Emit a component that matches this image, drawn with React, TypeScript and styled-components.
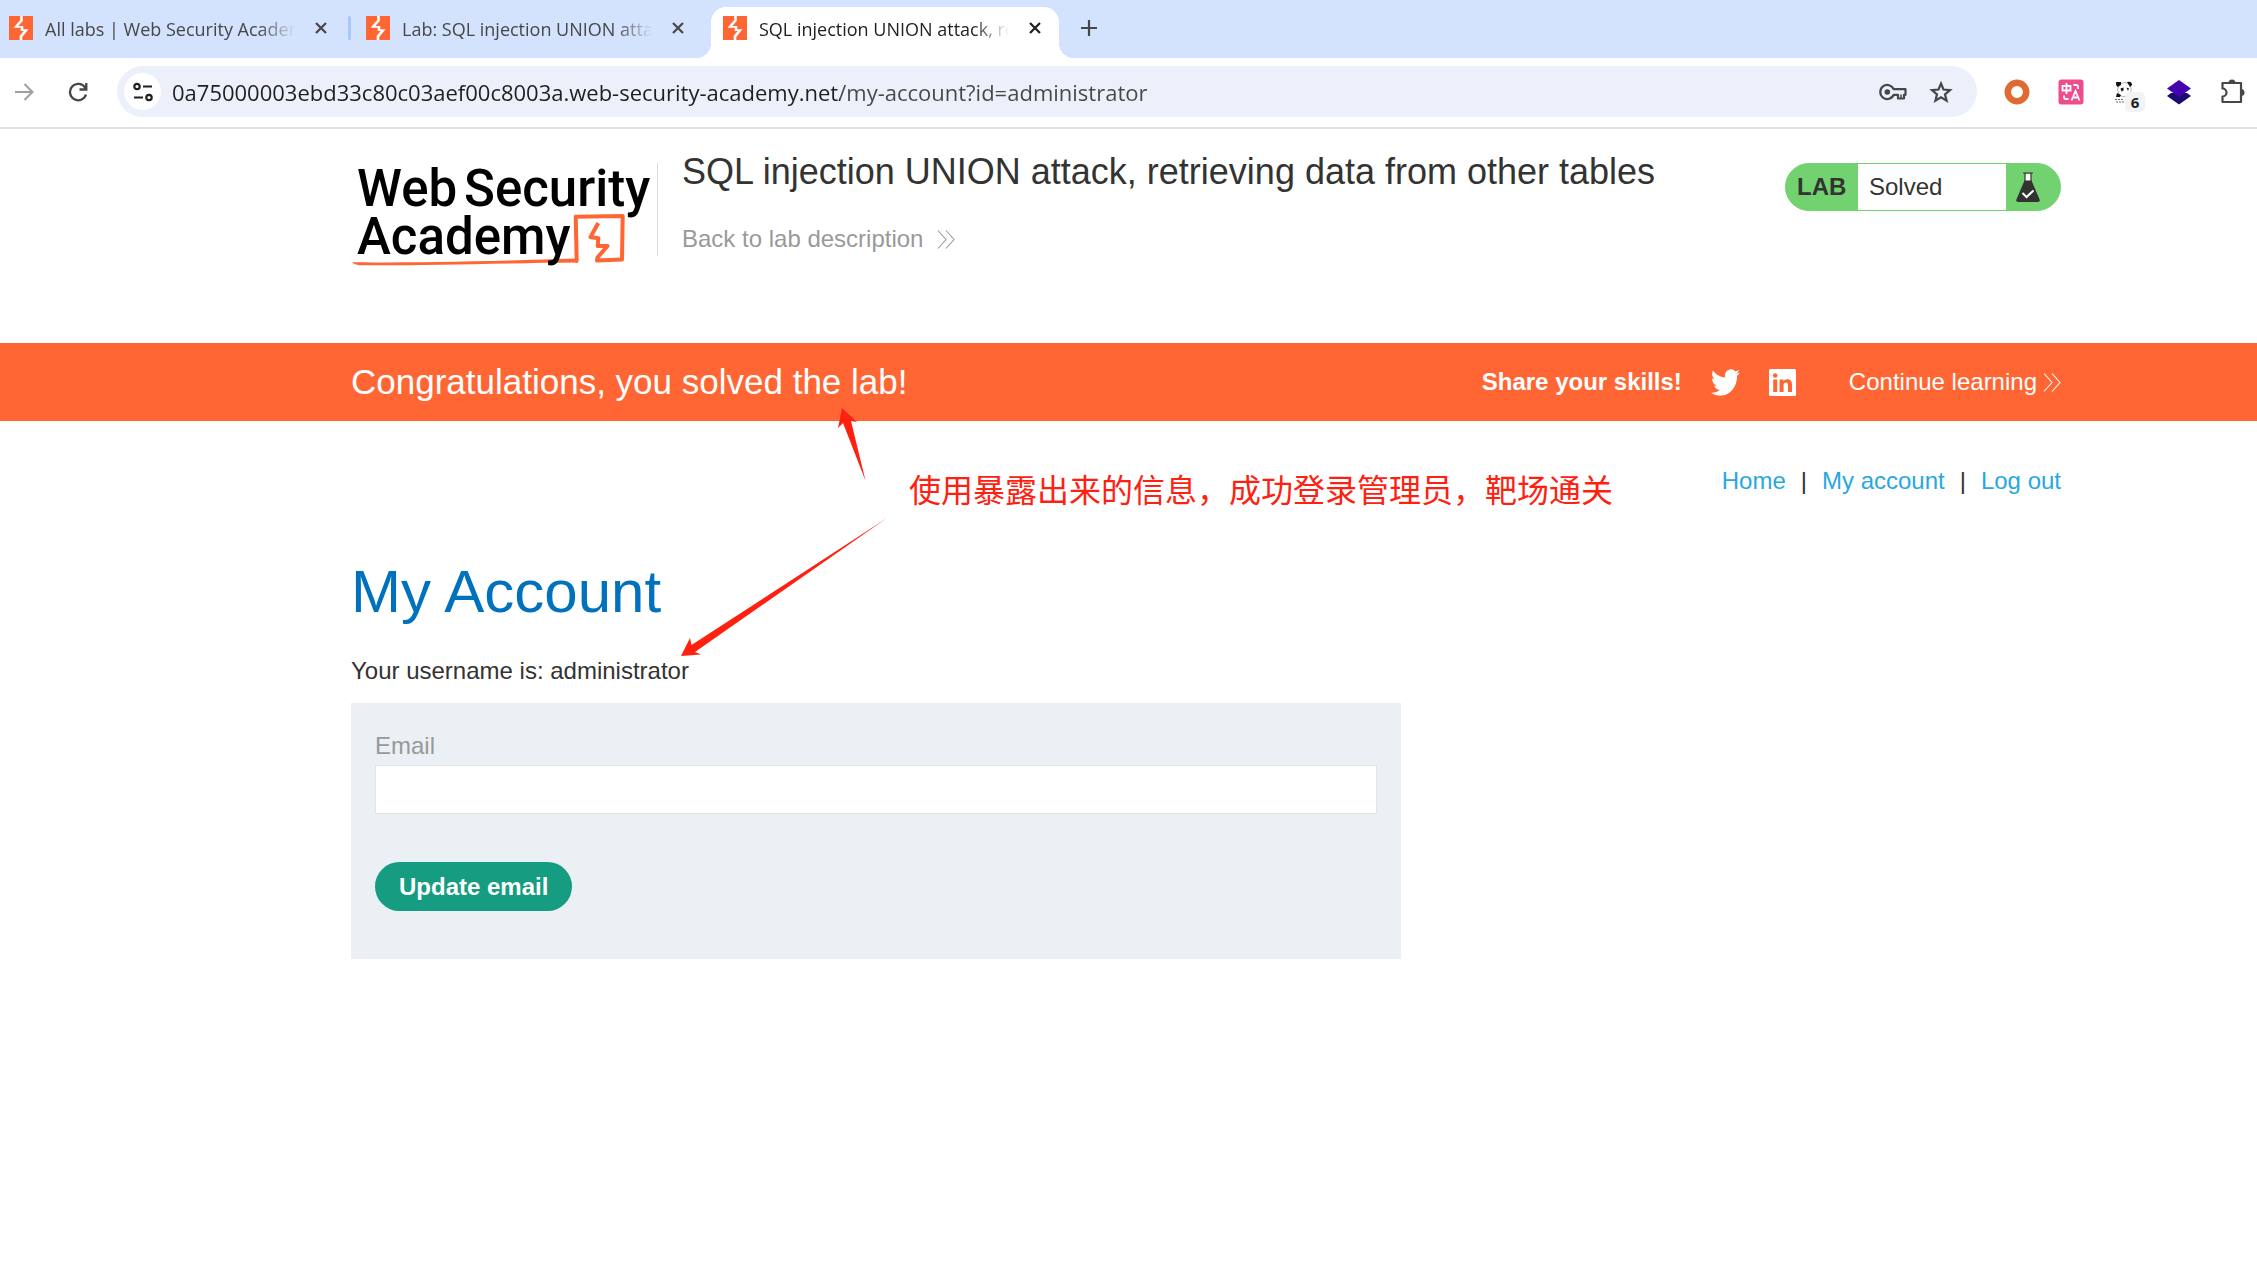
import React from "react";
import styled, { createGlobalStyle } from "styled-components";

const UI_FONT = '"Open Sans", "Noto Sans", "Noto Sans CJK SC", sans-serif';
const PAGE_FONT = '"Liberation Sans", Arial, "Noto Sans CJK SC", sans-serif';

const GlobalStyle = createGlobalStyle`
  *, *::before, *::after { box-sizing: border-box; }
  body { margin: 0; background: #fff; color: #333332; font-family: ${PAGE_FONT}; font-size: 24px; line-height: 28px; }
  h1, h2, p { margin: 0; font-weight: 400; }
  a { text-decoration: none; }
  button { border: 0; padding: 0; background: none; cursor: pointer; font: inherit; color: inherit; }
  svg { display: block; flex: none; }
`;

const Screen = styled.div`
  position: relative;
  min-height: 100vh;
`;

/* ---------- browser chrome ---------- */

const TabStrip = styled.div`
  display: flex;
  align-items: flex-end;
  height: 58px;
  background: #d3e2fd;
  font-family: ${UI_FONT};
`;

const Tab = styled.div<{ $active?: boolean; $divider?: boolean }>`
  position: relative;
  display: flex;
  align-items: center;
  flex: 0 1 ${(p) => (p.$active ? "348px" : "357px")};
  min-width: 0;
  height: 51px;
  padding: 0 ${(p) => (p.$active ? "12px" : "24px")} 9px ${(p) => (p.$active ? "12px" : "9px")};
  border-radius: 15px 15px 0 0;
  color: ${(p) => (p.$active ? "#1f1f1f" : "#474747")};
  background: ${(p) => (p.$active ? "#fff" : "transparent")};

  ${(p) =>
    p.$active &&
    `
    margin-left: -3px;
    &::before, &::after {
      content: "";
      position: absolute;
      bottom: 0;
      width: 15px;
      height: 15px;
    }
    &::before { right: 100%; background: radial-gradient(circle at 0 0, transparent 15px, #fff 15px); }
    &::after { left: 100%; background: radial-gradient(circle at 100% 0, transparent 15px, #fff 15px); }
  `}

  ${(p) =>
    p.$divider &&
    `
    &::after {
      content: "";
      position: absolute;
      right: 6px;
      top: 9px;
      width: 3px;
      height: 24px;
      border-radius: 2px;
      background: #a8c7fa;
    }
  `}
`;

const TabTitle = styled.span`
  flex: 1;
  min-width: 0;
  margin-left: 12px;
  padding-top: 2px;
  overflow: hidden;
  white-space: nowrap;
  font-size: 18px;
  line-height: 28px;
  mask-image: linear-gradient(to right, #000 calc(100% - 36px), transparent);
`;

const TabClose = styled.button`
  display: grid;
  place-items: center;
  width: 24px;
  height: 24px;
  margin-left: 14px;
`;

const NewTab = styled.button`
  display: grid;
  place-items: center;
  width: 30px;
  height: 30px;
  margin: 0 0 15px 15px;
  color: #474747;
`;

const Toolbar = styled.div`
  display: flex;
  align-items: center;
  height: 71px;
  padding: 0 11px 2px 10px;
  border-bottom: 2px solid #e0e2e1;
  background: #fff;
`;

const ToolButton = styled.button<{ $muted?: boolean }>`
  display: grid;
  place-items: center;
  width: 28px;
  height: 28px;
  color: ${(p) => (p.$muted ? "#a0a0a0" : "#474747")};
`;

const NavButtons = styled.div`
  display: flex;
  gap: 26px;
  margin-right: 25px;
`;

const Omnibox = styled.div`
  display: flex;
  align-items: center;
  flex: 1;
  height: 51px;
  padding: 0 22px 0 7px;
  border-radius: 26px;
  background: #ecf0fa;
`;

const SiteInfo = styled.button`
  display: grid;
  place-items: center;
  width: 37px;
  height: 37px;
  border-radius: 50%;
  background: #fff;
  color: #1f1f1f;
`;

const Address = styled.input`
  flex: 1;
  min-width: 0;
  margin-left: 11px;
  padding: 0;
  border: 0;
  outline: 0;
  font-family: ${UI_FONT};
  font-size: 22px;
  line-height: 32px;
  color: transparent;
  background: linear-gradient(to right, #1f1f1f 668px, #474747 668px);
  background-clip: text;
`;

const OmniboxActions = styled.div`
  display: flex;
  align-items: center;
  gap: 20px;
`;

const Extensions = styled.div`
  display: flex;
  align-items: center;
  gap: 28px;
  margin-left: 27px;
`;

const ExtensionButton = styled.button`
  position: relative;
  width: 26px;
  height: 26px;
`;

const ExtensionBadge = styled.span`
  position: absolute;
  left: 13px;
  top: 13px;
  width: 20px;
  height: 20px;
  border-radius: 5px;
  background: #f1f3f4;
  color: #1f1f1f;
  font: 700 15px/20px ${UI_FONT};
  text-align: center;
`;

/* ---------- lab page ---------- */

const gutters = "padding-left: 351px; padding-right: 196px;";

const Header = styled.header`
  display: flex;
  align-items: flex-start;
  ${gutters}
  padding-top: 23px;
  padding-bottom: 74px;
`;

const LogoDivider = styled.div`
  width: 1px;
  height: 93px;
  margin: 11px 24px 0 0;
  background: #dcdcdc;
`;

const TitleGroup = styled.div`
  flex: 1;
  min-width: 0;
`;

const LabTitle = styled.h2`
  font-size: 36px;
  line-height: 40px;
`;

const BackLink = styled.a`
  display: inline-flex;
  align-items: center;
  gap: 14px;
  margin-top: 33px;
  color: #999;
`;

const LabStatus = styled.div`
  display: flex;
  width: 276px;
  height: 48px;
  margin-top: 11px;
  border: 1px solid #71d26f;
  border-radius: 24px;
  overflow: hidden;
  background: #71d26f;
  line-height: 46px;
`;

const LabTag = styled.strong`
  width: 72px;
  padding-left: 11px;
`;

const LabState = styled.span`
  flex: 1;
  padding-left: 11px;
  background: #fff;
`;

const LabFlask = styled.span`
  width: 54px;
  padding: 8px 0 0 10px;
`;

const Banner = styled.section`
  display: flex;
  align-items: center;
  ${gutters}
  height: 78px;
  background: #ff6633;
  color: #fff;
`;

const BannerText = styled.p`
  flex: 1;
  font-size: 35px;
  line-height: 40px;
`;

const ShareLinks = styled.div`
  display: flex;
  align-items: center;
  gap: 29px;
  margin-right: 53px;
  a { color: #fff; }
`;

const ContinueLink = styled.a`
  display: flex;
  align-items: center;
  gap: 6px;
  color: #fff;
`;

const Main = styled.main`
  ${gutters}
  padding-top: 46px;
`;

const TopLinks = styled.nav`
  display: flex;
  justify-content: flex-end;
  gap: 15px;
  a { color: #29a7df; }
`;

const PageTitle = styled.h1`
  margin-top: 63px;
  font-size: 60px;
  line-height: 68px;
  color: #0071bd;
`;

const UserLine = styled.p`
  margin: 31px 0 18px;
`;

const EmailForm = styled.form`
  display: flex;
  flex-direction: column;
  align-items: flex-start;
  max-width: 1050px;
  padding: 24px 24px 48px;
  background: #eaf0f3;
`;

const EmailLabel = styled.label`
  line-height: 38px;
  color: #999;
`;

const EmailInput = styled.input`
  width: 100%;
  height: 49px;
  margin-bottom: 48px;
  padding: 0 12px;
  border: 1px solid #e0e5e6;
  border-radius: 0;
  background: #fff;
  font: 24px/28px ${PAGE_FONT};
`;

const SubmitButton = styled.button`
  height: 49px;
  padding: 0 24px;
  border-radius: 25px;
  background: #169c80;
  color: #fff;
  font-weight: 700;
`;

/* ---------- annotations drawn over the page ---------- */

const Note = styled.p`
  position: absolute;
  left: 909px;
  top: 464px;
  color: #ff2010;
  font-family: "Noto Sans CJK SC", sans-serif;
  font-size: 32px;
  line-height: 48px;
  white-space: nowrap;
`;

const Arrows = styled.svg`
  position: absolute;
  left: 681px;
  top: 408px;
  pointer-events: none;
`;

/* ---------- drawings ---------- */

const Favicon = () => (
  <svg width="24" height="24" viewBox="0 0 24 24">
    <path fill="#ff6633" d="M0 0h24v24H0z" />
    <path fill="#fff" d="M11.200 0h2.600v5L9.300 10h5v3.300H19.500L13.300 21v3h-2.600v-4.300l4-4.700h-3v-3.300H4.500L11.200 4z" />
  </svg>
);

const Cross = () => (
  <svg width="12" height="12" viewBox="0 0 12 12" fill="none" stroke="currentColor" strokeWidth="2.2">
    <path d="M1 1l10 10M11 1L1 11" />
  </svg>
);

const Chevrons = () => (
  <svg width="18" height="19" viewBox="0 0 18 19" fill="none" stroke="currentColor" strokeWidth="1.1">
    <path d="M1 .5l8 9-8 9M9 .5l8 9-8 9" />
  </svg>
);

const Logo = () => (
  <svg width="306" height="117" viewBox="0 -11 306 117">
    <path
      fill="none"
      stroke="#ff6633"
      strokeWidth="4"
      strokeLinejoin="round"
      d="M224 98.500L225.700 97.500 224.700 53.700 271.700 53 271 96.500 246 97.500 246.500 94.500 256.500 83 246.700 83 247.300 75.300 239.500 74 247.300 60"
    />
    <path fill="#ff6633" d="M.7 99.300C60 99.800 150 98 226 95.500L227 99.500C150 100 60 103 8 102.200Q2 101 .7 99.300z" />
    <g fill="#000" fontFamily="Roboto, sans-serif" fontWeight="500" fontSize="51">
      <text x="6" y="43">Web</text>
      <text x="113" y="43">Security</text>
      <text x="6" y="91">Academy</text>
    </g>
  </svg>
);

const Flask = () => (
  <svg width="24" height="31" viewBox="0 0 24 31">
    <path fill="#fff" d="M9 2h6v8H9z" />
    <path fill="none" stroke="#333332" strokeWidth="1.2" d="M7 1h10M9 1.500V10M15 1.500V10" />
    <path fill="#333332" d="M8.500 8.500h7L23.600 27.500Q24.300 30 22 30H2Q-.3 30 .4 27.500z" />
    <path fill="none" stroke="#fff" strokeWidth="2" d="M6.500 21l4 4 7-6.500" />
  </svg>
);

const Twitter = () => (
  <svg width="29" height="27" viewBox="0 2 24 20" fill="#fff" preserveAspectRatio="none">
    <path d="M23.950 4.570a10 10 0 0 1-2.820.77 4.960 4.960 0 0 0 2.160-2.720c-.95.550-2 .95-3.130 1.180a4.920 4.920 0 0 0-8.380 4.480C7.690 8.100 4.070 6.130 1.640 3.160a4.930 4.930 0 0 0 1.520 6.570 4.900 4.900 0 0 1-2.230-.61v.06a4.920 4.920 0 0 0 3.950 4.830 5 5 0 0 1-2.210.08 4.940 4.940 0 0 0 4.600 3.420A9.870 9.870 0 0 1 0 19.540a14 14 0 0 0 7.550 2.210c9.050 0 14-7.500 14-13.980 0-.21 0-.42-.02-.63a9.940 9.940 0 0 0 2.460-2.550z" />
  </svg>
);

const LinkedIn = () => (
  <svg width="27" height="27" viewBox="0 0 27 27">
    <rect width="27" height="27" rx="1.500" fill="#fff" />
    <g fill="#ff6633">
      <circle cx="6.200" cy="6.500" r="2.300" />
      <path d="M4.200 10.500h4V23h-4zM10.600 10.500h3.800v1.800c.8-1.300 2.100-2.100 3.900-2.100 3.400 0 4.700 2.100 4.700 5.600V23h-4v-6.500c0-1.800-.5-3-2-3-1.700 0-2.400 1.200-2.400 3V23h-4z" />
    </g>
  </svg>
);

const TABS = [
  { title: "All labs | Web Security Academy", divider: true },
  { title: "Lab: SQL injection UNION attack, retrieving" },
  { title: "SQL injection UNION attack, retrieving", active: true },
];

function BrowserChrome() {
  return (
    <div>
      <TabStrip>
        {TABS.map((tab) => (
          <Tab key={tab.title} $active={tab.active} $divider={tab.divider}>
            <Favicon />
            <TabTitle>{tab.title}</TabTitle>
            <TabClose aria-label="Close tab">
              <Cross />
            </TabClose>
          </Tab>
        ))}
        <NewTab aria-label="New tab">
          <svg width="16" height="16" viewBox="0 0 16 16" fill="none" stroke="currentColor" strokeWidth="2.200">
            <path d="M8 0v16M0 8h16" />
          </svg>
        </NewTab>
      </TabStrip>
      <Toolbar>
        <NavButtons>
          <ToolButton $muted aria-label="Forward">
            <svg width="19" height="18" viewBox="0 0 19 18" fill="none" stroke="currentColor" strokeWidth="2">
              <path d="M0 9h17M9.500 1l8 8-8 8" />
            </svg>
          </ToolButton>
          <ToolButton aria-label="Reload">
            <svg width="20" height="20" viewBox="0 0 20 20" fill="none" stroke="currentColor" strokeWidth="2.300">
              <path d="M17.300 6A8.200 8.200 0 1 0 18 12.500M18.300 1v6.500H11.500" />
            </svg>
          </ToolButton>
        </NavButtons>
        <Omnibox>
          <SiteInfo aria-label="View site information">
            <svg width="20" height="20" viewBox="0 0 20 20" fill="none" stroke="currentColor" strokeWidth="2.200">
              <circle cx="4" cy="4.500" r="2.700" />
              <path d="M10 4.500h9M1 15.500h9" />
              <circle cx="16" cy="15.500" r="2.700" />
            </svg>
          </SiteInfo>
          <Address
            aria-label="Address"
            defaultValue="0a75000003ebd33c80c03aef00c8003a.web-security-academy.net/my-account?id=administrator"
          />
          <OmniboxActions>
            <ToolButton aria-label="Passwords">
              <svg width="28" height="18" viewBox="0 0 28 18" fill="none" stroke="currentColor" strokeWidth="2.200" strokeLinejoin="round">
                <path d="M14.700 6.200A7 7 0 1 0 14.700 11.800H19V15.500H25V11.800H26.500V6.200z" />
                <circle cx="8.300" cy="9" r="2.800" fill="currentColor" stroke="none" />
                <path d="M22 11.500V15" strokeWidth="1.500" />
              </svg>
            </ToolButton>
            <ToolButton aria-label="Bookmark this tab">
              <svg width="24" height="24" viewBox="0 0 24 24" fill="none" stroke="currentColor" strokeWidth="2.200">
                <path d="M12 3.500l2.500 6 6.500.6-5 4.200 1.600 6.400L12 17.300 6.400 20.700 8 14.300 3 10.100l6.500-.6z" />
              </svg>
            </ToolButton>
          </OmniboxActions>
        </Omnibox>
        <Extensions>
          <ExtensionButton aria-label="Ring extension">
            <svg width="26" height="26" viewBox="0 0 26 26">
              <circle cx="13" cy="13" r="9.200" fill="none" stroke="#e06a33" strokeWidth="6.500" />
            </svg>
          </ExtensionButton>
          <ExtensionButton aria-label="Translate">
            <svg width="26" height="26" viewBox="0 0 26 26" fill="none" stroke="#fff" strokeWidth="1.800">
              <rect x=".5" y=".5" width="25" height="25" rx="3" fill="#ee4c8b" stroke="none" />
              <path d="M4.500 7h8v4.500h-8zM8.500 4v11M15.500 6h2.500q2 0 2 2v2M6 16.500v1.500q0 2 2 2h2.500M13.500 21.500l4-9.500 4 9.500M15 18.500h5" />
            </svg>
          </ExtensionButton>
          <ExtensionButton aria-label="Panda extension, 6 items">
            <svg width="26" height="26" viewBox="0 0 26 26">
              <path fill="none" stroke="#b5b5b5" d="M7 6Q13 1 18 6Q21 12 16 17Q10 19 7 15Q4 11 7 6z" />
              <path fill="#111" d="M4 3h5v3L5.500 8Q3.500 6 4 3zM15 3q5-1 5 3l-2 2zM8.500 9.500l3-1v3l-2 1zM14.500 8.500l2.500 1-1 2.500zM5 14l4 2-1 2H4z" />
              <path stroke="#666" strokeDasharray="2 1" d="M3 20.500h9M4 23h8" />
            </svg>
            <ExtensionBadge>6</ExtensionBadge>
          </ExtensionButton>
          <ExtensionButton aria-label="Layers extension">
            <svg width="26" height="26" viewBox="0 0 26 26">
              <path fill="#1d0a73" d="M1 17l4-3h16l4 3-12 8.500z" />
              <path fill="#4404b0" d="M13 1l12 8.500L13 18 1 9.500z" />
            </svg>
          </ExtensionButton>
          <ExtensionButton aria-label="Extensions">
            <svg width="26" height="26" viewBox="0 0 26 26" fill="none" stroke="#474747" strokeWidth="2.200" strokeLinejoin="round">
              <path d="M2.500 4h18.500v19H2.500v-5.500a4 4 0 0 0 0-8z" />
              <path fill="#474747" stroke="none" d="M8.500 4a3.500 3.500 0 0 1 7 0zM21 10a3.500 3.500 0 0 1 0 7z" />
            </svg>
          </ExtensionButton>
        </Extensions>
      </Toolbar>
    </div>
  );
}

export default function App() {
  return (
    <Screen>
      <GlobalStyle />
      <BrowserChrome />
      <Header>
        <a href="#" aria-label="Web Security Academy">
          <Logo />
        </a>
        <LogoDivider />
        <TitleGroup>
          <LabTitle>SQL injection UNION attack, retrieving data from other tables</LabTitle>
          <BackLink href="#">
            Back to lab description
            <Chevrons />
          </BackLink>
        </TitleGroup>
        <LabStatus>
          <LabTag>LAB</LabTag>
          <LabState>Solved</LabState>
          <LabFlask>
            <Flask />
          </LabFlask>
        </LabStatus>
      </Header>
      <Banner>
        <BannerText>Congratulations, you solved the lab!</BannerText>
        <ShareLinks>
          <strong>Share your skills!</strong>
          <a href="#" aria-label="Share on Twitter">
            <Twitter />
          </a>
          <a href="#" aria-label="Share on LinkedIn">
            <LinkedIn />
          </a>
        </ShareLinks>
        <ContinueLink href="#">
          Continue learning
          <Chevrons />
        </ContinueLink>
      </Banner>
      <Main>
        <TopLinks>
          <a href="#">Home</a>
          <span>|</span>
          <a href="#">My account</a>
          <span>|</span>
          <a href="#">Log out</a>
        </TopLinks>
        <PageTitle>My Account</PageTitle>
        <UserLine>Your username is: administrator</UserLine>
        <EmailForm onSubmit={(e) => e.preventDefault()}>
          <EmailLabel htmlFor="email">Email</EmailLabel>
          <EmailInput id="email" type="email" />
          <SubmitButton type="submit">Update email</SubmitButton>
        </EmailForm>
      </Main>
      <Note>使用暴露出来的信息，成功登录管理员，靶场通关</Note>
      <Arrows width="207" height="249" viewBox="0 0 207 249" fill="#ff2010">
        <path d="M161 0L176 14 170 13 184.600 73 162 15 157 20z" />
        <path d="M0 248L9 230 10.500 237 206 110 14 244 20 246.500z" />
      </Arrows>
    </Screen>
  );
}
